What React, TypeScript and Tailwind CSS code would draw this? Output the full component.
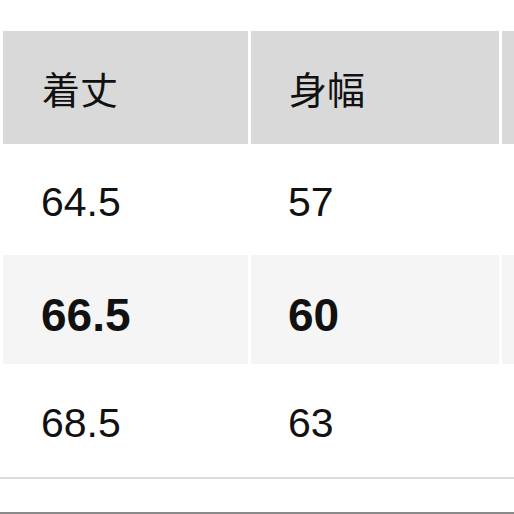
import { Fragment } from "react";

const rows = [
  { length: "64.5", width: "57", bold: false, bg: "bg-white", h: "h-[111px]" },
  { length: "66.5", width: "60", bold: true, bg: "bg-[#f5f5f5]", h: "h-[109px]" },
  { length: "68.5", width: "63", bold: false, bg: "bg-white", h: "h-[113px]" },
];

const font = { fontFamily: '"Liberation Sans", "Noto Sans CJK JP", sans-serif' };

export default function App() {
  return (
    <div className="w-[514px] h-[514px] bg-white overflow-hidden flex flex-col" style={font}>
      <div className="pt-[31px] pl-[3px]">
        <div className="grid grid-cols-[245px_248px_248px] gap-x-[3px] text-[41px] text-[#111]">
          {/* header */}
          <div className="bg-[#d9d9d9] h-[113px] flex items-center pl-[39px] pt-[8px] text-[38px]">着丈</div>
          <div className="bg-[#d9d9d9] h-[113px] flex items-center pl-[38px] pt-[8px] text-[38px]">身幅</div>
          <div className="bg-[#d9d9d9] h-[113px]" />

          {rows.map((r) => (
            <Fragment key={r.length}>
              <div
                className={`${r.bg} ${r.h} flex items-center pl-[38px] ${r.bold ? "font-bold text-[46px] pt-[11px]" : "pt-[6px]"}`}
              >
                {r.length}
              </div>
              <div
                className={`${r.bg} ${r.h} flex items-center pl-[37px] ${r.bold ? "font-bold text-[46px] pt-[11px]" : "pt-[6px]"}`}
              >
                {r.width}
              </div>
              <div className={`${r.bg} ${r.h}`} />
            </Fragment>
          ))}
        </div>
      </div>
      <div className="h-[2px] bg-[#dcdcdc]" />
      <div className="flex-1" />
      <div className="h-[2px] bg-[#8a8a8a]" />
    </div>
  );
}
